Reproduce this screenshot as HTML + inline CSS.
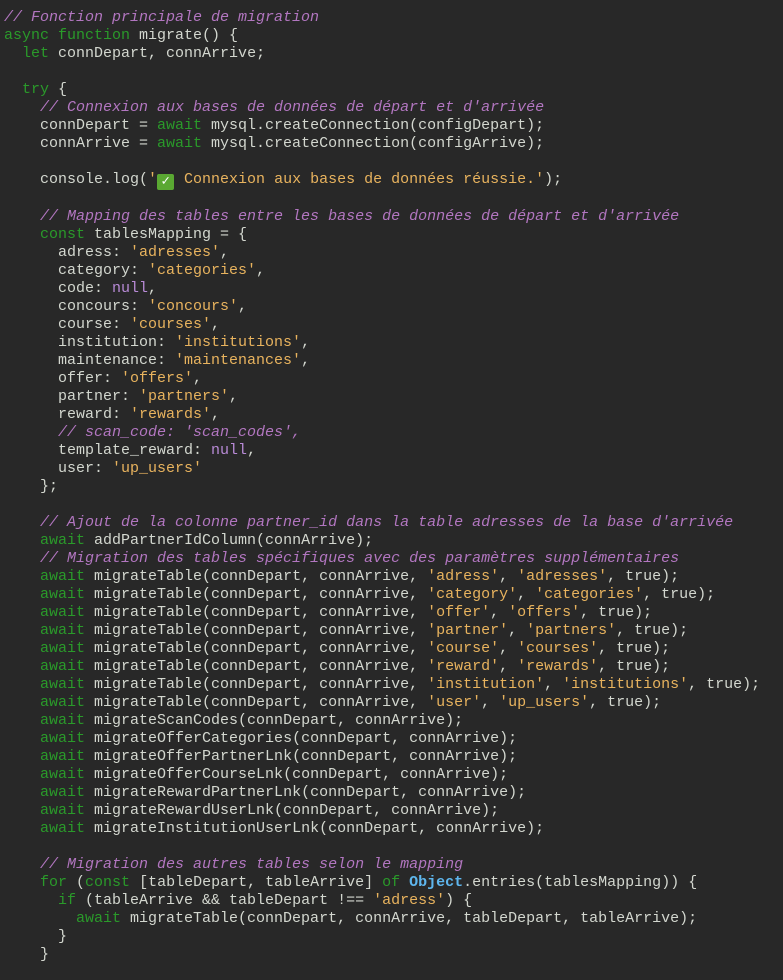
<!DOCTYPE html>
<html><head><meta charset="utf-8"><style>
html,body{margin:0;padding:0;background:#282828;}
body{width:783px;height:980px;overflow:hidden;}
pre{margin:0;padding:9px 0 0 4px;font-family:"Liberation Mono",monospace;font-size:15px;line-height:18px;color:#d3d7cf;white-space:pre;}
.c{color:#b276c0;font-style:italic}
.k{color:#2a9a2a}
.s{color:#e8b35e}
.n{color:#b88ad6}
.o{color:#5eb6ee;font-weight:bold}
.e{display:inline-block;width:17px;height:16px;background:#5aa832;color:#fff;border-radius:2px;text-align:center;line-height:16px;font-weight:bold;vertical-align:-2px;margin-right:1px;font-size:14px}
</style></head><body><pre><span class="c">// Fonction principale de migration</span>
<span class="k">async function</span> migrate() {
  <span class="k">let</span> connDepart, connArrive;

  <span class="k">try</span> {
    <span class="c">// Connexion aux bases de données de départ et d'arrivée</span>
    connDepart = <span class="k">await</span> mysql.createConnection(configDepart);
    connArrive = <span class="k">await</span> mysql.createConnection(configArrive);

    console.log(<span class="s">'<span class="e">✓</span> Connexion aux bases de données réussie.'</span>);

    <span class="c">// Mapping des tables entre les bases de données de départ et d'arrivée</span>
    <span class="k">const</span> tablesMapping = {
      adress: <span class="s">'adresses'</span>,
      category: <span class="s">'categories'</span>,
      code: <span class="n">null</span>,
      concours: <span class="s">'concours'</span>,
      course: <span class="s">'courses'</span>,
      institution: <span class="s">'institutions'</span>,
      maintenance: <span class="s">'maintenances'</span>,
      offer: <span class="s">'offers'</span>,
      partner: <span class="s">'partners'</span>,
      reward: <span class="s">'rewards'</span>,
      <span class="c">// scan_code: 'scan_codes',</span>
      template_reward: <span class="n">null</span>,
      user: <span class="s">'up_users'</span>
    };

    <span class="c">// Ajout de la colonne partner_id dans la table adresses de la base d'arrivée</span>
    <span class="k">await</span> addPartnerIdColumn(connArrive);
    <span class="c">// Migration des tables spécifiques avec des paramètres supplémentaires</span>
    <span class="k">await</span> migrateTable(connDepart, connArrive, <span class="s">'adress'</span>, <span class="s">'adresses'</span>, true);
    <span class="k">await</span> migrateTable(connDepart, connArrive, <span class="s">'category'</span>, <span class="s">'categories'</span>, true);
    <span class="k">await</span> migrateTable(connDepart, connArrive, <span class="s">'offer'</span>, <span class="s">'offers'</span>, true);
    <span class="k">await</span> migrateTable(connDepart, connArrive, <span class="s">'partner'</span>, <span class="s">'partners'</span>, true);
    <span class="k">await</span> migrateTable(connDepart, connArrive, <span class="s">'course'</span>, <span class="s">'courses'</span>, true);
    <span class="k">await</span> migrateTable(connDepart, connArrive, <span class="s">'reward'</span>, <span class="s">'rewards'</span>, true);
    <span class="k">await</span> migrateTable(connDepart, connArrive, <span class="s">'institution'</span>, <span class="s">'institutions'</span>, true);
    <span class="k">await</span> migrateTable(connDepart, connArrive, <span class="s">'user'</span>, <span class="s">'up_users'</span>, true);
    <span class="k">await</span> migrateScanCodes(connDepart, connArrive);
    <span class="k">await</span> migrateOfferCategories(connDepart, connArrive);
    <span class="k">await</span> migrateOfferPartnerLnk(connDepart, connArrive);
    <span class="k">await</span> migrateOfferCourseLnk(connDepart, connArrive);
    <span class="k">await</span> migrateRewardPartnerLnk(connDepart, connArrive);
    <span class="k">await</span> migrateRewardUserLnk(connDepart, connArrive);
    <span class="k">await</span> migrateInstitutionUserLnk(connDepart, connArrive);

    <span class="c">// Migration des autres tables selon le mapping</span>
    <span class="k">for</span> (<span class="k">const</span> [tableDepart, tableArrive] <span class="k">of</span> <span class="o">Object</span>.entries(tablesMapping)) {
      <span class="k">if</span> (tableArrive &amp;&amp; tableDepart !== <span class="s">'adress'</span>) {
        <span class="k">await</span> migrateTable(connDepart, connArrive, tableDepart, tableArrive);
      }
    }
</pre></body></html>
